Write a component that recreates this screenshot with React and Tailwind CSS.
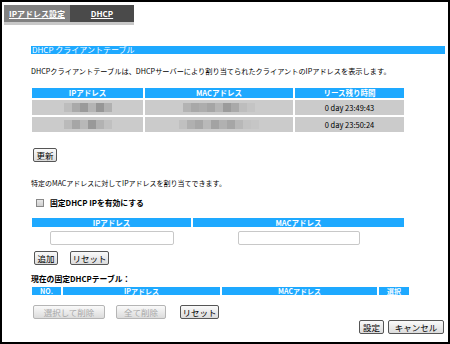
import React from 'react';

const font = { fontFamily: '"MS UI Gothic", "Noto Sans CJK JP", sans-serif' };

const Btn = ({ children, disabled, className = '' }) => (
  <button
    className={`h-[14px] inline-flex items-center justify-center whitespace-nowrap rounded-[2px] border text-[8.5px] leading-[12px] bg-gradient-to-b from-[#fafafa] to-[#dcdcdc] ${
      disabled ? 'border-[#b5b5b5] text-[#a8a8a8]' : 'border-[#555] text-black'
    } ${className}`}
  >
    {children}
  </button>
);

const Blur = ({ shades }) => (
  <div className="flex">
    {shades.map((c, i) => (
      <div key={i} className="w-[8px] h-[9px]" style={{ background: c }} />
    ))}
  </div>
);

const clients = [
  {
    ip: ['#bdbdbd', '#a9a9a9', '#9a9a9a', '#b4b4b4', '#969696', '#b0b0b0'],
    mac: ['#b3b3b3', '#a8a8a8', '#adadad', '#a5a5a5', '#b5b5b5', '#9b9b9b', '#a9a9a9', '#bdbdbd', '#c4c4c4'],
    time: '0 day 23:49:43',
  },
  {
    ip: ['#bababa', '#a6a6a6', '#b8b8b8', '#999999', '#b2b2b2', '#c0c0c0'],
    mac: ['#c0c0c0', '#b0b0b0', '#a7a7a7', '#b9b9b9', '#a3a3a3', '#b1b1b1', '#a6a6a6', '#b8b8b8', '#c3c3c3', '#c6c6c6'],
    time: '0 day 23:50:24',
  },
];

const App = () => {
  return (
    <div className="w-[450px] h-[344px] bg-white border-2 border-black overflow-hidden text-black" style={font}>
      {/* tabs */}
      <div className="ml-[2px] mt-[3px] flex w-[130px] border-b-[3px] border-[#c8c8c8]">
        <div className="w-[66px] h-[17px] bg-[#808080] text-white text-[8px] font-bold underline flex items-center justify-center">
          IPアドレス設定
        </div>
        <div className="w-[64px] h-[17px] bg-[#4a4a4a] text-white text-[8px] font-bold underline flex items-center justify-center">
          DHCP
        </div>
      </div>

      <div className="pl-[29px] pr-[3px]">
        <div className="mt-[21px] h-[8px] bg-[#1ea9ff] text-white text-[8px] leading-[8px] pl-[1px] whitespace-nowrap">
          DHCP クライアントテーブル
        </div>

        <p className="mt-[12px] text-[7.2px] leading-[10px] whitespace-nowrap">
          DHCPクライアントテーブルは、DHCPサーバーにより割り当てられたクライアントのIPアドレスを表示します。
        </p>

        <div className="mt-[12px] ml-[1px] w-[372px] grid grid-cols-[111px_148px_109px] gap-[2px]">
          <div className="h-[10px] bg-[#1ea9ff] text-white text-[7.5px] font-bold leading-[10px] text-center">IPアドレス</div>
          <div className="h-[10px] bg-[#1ea9ff] text-white text-[7.5px] font-bold leading-[10px] text-center">MACアドレス</div>
          <div className="h-[10px] bg-[#1ea9ff] text-white text-[7.5px] font-bold leading-[10px] text-center">リース残り時間</div>
          {clients.map((c, i) => (
            <React.Fragment key={i}>
              <div className="h-[15px] bg-[#cbcbcb] flex items-center justify-center">
                <Blur shades={c.ip} />
              </div>
              <div className="h-[15px] bg-[#cbcbcb] flex items-center justify-center">
                <Blur shades={c.mac} />
              </div>
              <div className="h-[15px] bg-[#cbcbcb] flex items-center justify-center text-[7.5px]">
                {c.time}
              </div>
            </React.Fragment>
          ))}
        </div>

        <div className="mt-[16px] ml-[2px] flex">
          <Btn className="w-[24px] border-[#4a6a90]">更新</Btn>
        </div>

        <p className="mt-[16px] text-[7px] leading-[10px] whitespace-nowrap">
          特定のMACアドレスに対してIPアドレスを割り当てできます。
        </p>

        <label className="mt-[10px] ml-[5px] flex items-center gap-[6px] h-[10px]">
          <span className="w-[8px] h-[8px] border border-[#888] bg-gradient-to-b from-[#e8e8e8] to-[#cfcfcf]" />
          <span className="text-[7.8px] font-bold whitespace-nowrap">固定DHCP IPを有効にする</span>
        </label>

        <div className="mt-[10px] ml-[1px] w-[372px] grid grid-cols-[159px_211px] gap-[2px]">
          <div className="h-[9px] bg-[#1ea9ff] text-white text-[7.5px] font-bold leading-[9px] text-center">IPアドレス</div>
          <div className="h-[9px] bg-[#1ea9ff] text-white text-[7.5px] font-bold leading-[9px] text-center">MACアドレス</div>
          <div className="h-[16px] pt-[2px] flex justify-center">
            <input className="w-[124px] h-[14px] border border-[#c8c8c8] rounded-[2px]" />
          </div>
          <div className="h-[16px] pt-[2px] flex justify-center">
            <input className="w-[122px] h-[14px] border border-[#c8c8c8] rounded-[2px]" />
          </div>
        </div>

        <div className="mt-[6px] ml-[3px] flex gap-[12px]">
          <Btn className="w-[24px]">追加</Btn>
          <Btn className="w-[39px]">リセット</Btn>
        </div>

        <p className="mt-[9px] text-[7.8px] font-bold leading-[10px] whitespace-nowrap">
          現在の固定DHCPテーブル：
        </p>

        <div className="mt-[3px] ml-[1px] w-[377px] grid grid-cols-[29px_157px_155px_30px] gap-[2px]">
          <div className="h-[8px] bg-[#1ea9ff] text-white text-[7px] font-bold leading-[8px] text-center">NO.</div>
          <div className="h-[8px] bg-[#1ea9ff] text-white text-[7px] font-bold leading-[8px] text-center">IPアドレス</div>
          <div className="h-[8px] bg-[#1ea9ff] text-white text-[7px] font-bold leading-[8px] text-center">MACアドレス</div>
          <div className="h-[8px] bg-[#1ea9ff] text-white text-[7px] font-bold leading-[8px] text-center">選択</div>
        </div>

        <div className="mt-[10px] ml-[2px] flex">
          <Btn disabled className="w-[72px]">選択して削除</Btn>
          <Btn disabled className="ml-[11px] w-[50px]">全て削除</Btn>
          <Btn className="ml-[14px] w-[39px]">リセット</Btn>
        </div>

        <div className="mt-[1px] flex justify-end gap-[4px] pr-[1px]">
          <Btn className="w-[25px]">設定</Btn>
          <Btn className="w-[56px]">キャンセル</Btn>
        </div>
      </div>
    </div>
  );
};

export default App;
